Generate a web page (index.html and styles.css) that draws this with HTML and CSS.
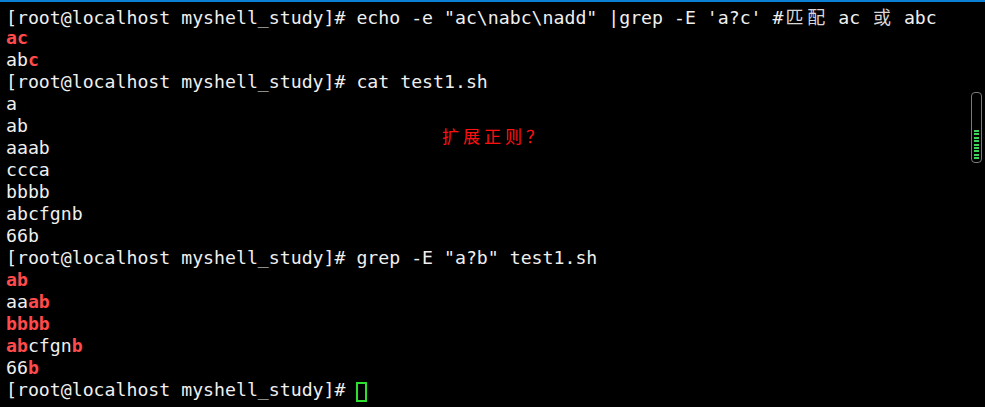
FILE: index.html
```html
<!DOCTYPE html>
<html lang="zh">
<head>
<meta charset="utf-8">
<link rel="stylesheet" href="styles.css">
</head>
<body>
<div class="term">
  <div class="screen">
    <div class="ln">[root@localhost myshell_study]# echo -e "ac\nabc\nadd" |grep -E 'a?c' #<span class="w">匹</span><span class="w">配</span> ac <span class="w">或</span> abc</div>
    <div class="ln"><b class="m">ac</b></div>
    <div class="ln">ab<b class="m">c</b></div>
    <div class="ln">[root@localhost myshell_study]# cat test1.sh</div>
    <div class="ln">a</div>
    <div class="ln">ab</div>
    <div class="ln">aaab</div>
    <div class="ln">ccca</div>
    <div class="ln">bbbb</div>
    <div class="ln">abcfgnb</div>
    <div class="ln">66b</div>
    <div class="ln">[root@localhost myshell_study]# grep -E "a?b" test1.sh</div>
    <div class="ln"><b class="m">ab</b></div>
    <div class="ln">aa<b class="m">ab</b></div>
    <div class="ln"><b class="m">bbbb</b></div>
    <div class="ln"><b class="m">ab</b>cfgn<b class="m">b</b></div>
    <div class="ln">66<b class="m">b</b></div>
    <div class="ln">[root@localhost myshell_study]# <span class="cursor"> </span></div>
  </div>
  <div class="note">扩展正则？</div>
  <div class="scroll"><div class="thumb"></div></div>
</div>
</body>
</html>
```

FILE: styles.css
```css
html, body {
  margin: 0;
  padding: 0;
  background: #000;
}
.term {
  position: relative;
  width: 985px;
  height: 407px;
  box-sizing: border-box;
  border-top: 2px solid #0a7fd6;
  background: #000;
  overflow: hidden;
}
.screen {
  padding: 3px 0 0 6px;
  font-family: "DejaVu Sans Mono", "Noto Sans CJK SC", monospace;
  font-size: 18.2px;
  line-height: 22px;
  color: #efefef;
}
.ln {
  height: 22px;
  white-space: pre;
}
.m {
  color: #ff4b4b;
  font-weight: bold;
}
.w {
  display: inline-block;
  width: 21.92px;
  text-align: center;
  font-family: "Noto Sans CJK SC", sans-serif;
  font-size: 18px;
  color: #d8d8d8;
}
.cursor {
  display: inline-block;
  width: 11px;
  height: 20px;
  box-sizing: border-box;
  border: 2px solid #2ee02e;
  vertical-align: -5px;
}
.note {
  position: absolute;
  left: 442px;
  top: 123px;
  font-family: "Noto Sans CJK SC", sans-serif;
  font-size: 17px;
  letter-spacing: 4px;
  color: #ff1010;
  line-height: 22px;
}
.scroll {
  position: absolute;
  left: 971px;
  top: 90px;
  width: 11px;
  height: 71px;
  box-sizing: border-box;
  border: 1px solid #7a7a7a;
  border-radius: 4px;
  display: flex;
  flex-direction: column;
  justify-content: flex-end;
  padding: 0 2px 2px;
}
.thumb {
  height: 30px;
  background: repeating-linear-gradient(to bottom, #3ed45a 0 2px, #000 2px 3.4px);
}
```
